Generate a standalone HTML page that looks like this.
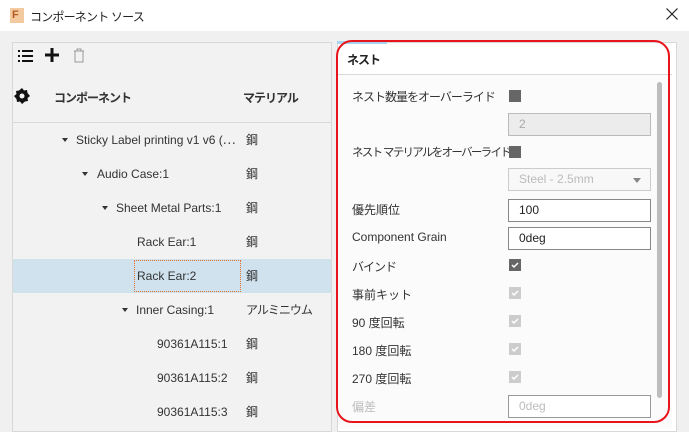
<!DOCTYPE html>
<html><head><meta charset="utf-8"><style>
*{margin:0;padding:0;box-sizing:border-box}
body{width:689px;height:429px;overflow:hidden;background:#f0f0f0;font-family:"Liberation Sans","Noto Sans CJK JP",sans-serif;font-size:12px;color:#222;position:relative}
.a{position:absolute}
.title{left:0;top:0;width:689px;height:31px;background:#fff}
.row{position:absolute;left:13px;width:318px;height:34px;line-height:34px}
.tri{position:absolute;width:0;height:0;border-left:3px solid transparent;border-right:3px solid transparent;border-top:4px solid #333;top:15px}
.lab{position:absolute;font-size:12px;color:#333}
.jp{letter-spacing:-1px}
.inp{position:absolute;left:508px;width:143px;height:23px;border:1px solid #999;background:#fff;padding-left:10px;line-height:21px;font-size:12px}
.plab{position:absolute;left:352px;font-size:12px;color:#333;letter-spacing:-1px}
</style></head><body>
<div class="a title"></div>
<div class="a" style="left:10px;top:8px;width:14px;height:15px;background:#f3c9a0;color:#b35a1f;font-weight:bold;font-size:11px;line-height:15px;padding-left:2px">F</div>
<div class="a" style="left:30px;top:8px;font-size:12px;letter-spacing:-0.8px">コンポーネント ソース</div>
<svg class="a" style="left:666px;top:8px" width="12" height="12"><path d="M0.5 0.5l11 11M11.5 0.5l-11 11" stroke="#222" stroke-width="1.2"/></svg>
<!-- left panel -->
<div class="a" style="left:12px;top:42px;width:320px;height:390px;background:#f2f2f2;border:1px solid #d8d8d8"></div>
<div class="a" style="left:13px;top:122px;width:318px;height:1px;background:#d8d8d8"></div>
<svg class="a" style="left:18px;top:50px" width="16" height="12"><g fill="#111"><rect x="0" y="0" width="2" height="2"/><rect x="4" y="0" width="11" height="2"/><rect x="0" y="5" width="2" height="2"/><rect x="4" y="5" width="11" height="2"/><rect x="0" y="10" width="2" height="2"/><rect x="4" y="10" width="11" height="2"/></g></svg>
<svg class="a" style="left:45px;top:48px" width="14" height="14"><rect x="5.5" y="0" width="3" height="14" fill="#111"/><rect x="0" y="5.5" width="14" height="3" fill="#111"/></svg>
<svg class="a" style="left:73px;top:48px" width="12" height="15"><path d="M1 3h10M4 3V1h4v2M2 3v11h8V3" stroke="#999" fill="none"/></svg>
<svg class="a" style="left:14px;top:88px" width="16" height="16" viewBox="0 0 16 16"><path d="M8 0l2 2.5 3-.5.5 3L16 8l-2.5 2 .5 3-3 .5L8 16l-2-2.5-3 .5-.5-3L0 8l2.5-2L2 3l3-.5z" fill="#111"/><circle cx="8" cy="8" r="2.5" fill="#f2f2f2"/></svg>
<div class="a jp" style="left:54px;top:89px;font-weight:bold;color:#333">コンポーネント</div>
<div class="a jp" style="left:243px;top:89px;font-weight:bold;color:#333">マテリアル</div>
<div class="row" style="top:123px"><div class="tri" style="left:49px"></div><span class="lab" style="left:63px">Sticky Label printing v1 v6 (⋯</span><span class="lab" style="left:233px">鋼</span></div>
<div class="row" style="top:157px"><div class="tri" style="left:69px"></div><span class="lab" style="left:84px">Audio Case:1</span><span class="lab" style="left:233px">鋼</span></div>
<div class="row" style="top:191px"><div class="tri" style="left:89px"></div><span class="lab" style="left:103px">Sheet Metal Parts:1</span><span class="lab" style="left:233px">鋼</span></div>
<div class="row" style="top:225px"><span class="lab" style="left:124px">Rack Ear:1</span><span class="lab" style="left:233px">鋼</span></div>
<div class="row" style="top:259px;background:#cfe2ee"><div class="a" style="left:121px;top:1px;width:107px;height:32px;border:1px dotted #e07030"></div><span class="lab" style="left:124px">Rack Ear:2</span><span class="lab" style="left:233px">鋼</span></div>
<div class="row" style="top:293px"><div class="tri" style="left:109px"></div><span class="lab" style="left:123px">Inner Casing:1</span><span class="lab jp" style="left:233px">アルミニウム</span></div>
<div class="row" style="top:327px"><span class="lab" style="left:144px">90361A115:1</span><span class="lab" style="left:233px">鋼</span></div>
<div class="row" style="top:361px"><span class="lab" style="left:144px">90361A115:2</span><span class="lab" style="left:233px">鋼</span></div>
<div class="row" style="top:395px"><span class="lab" style="left:144px">90361A115:3</span><span class="lab" style="left:233px">鋼</span></div>
<!-- right panel -->
<div class="a" style="left:337px;top:42px;width:340px;height:390px;background:#fff;border:1px solid #d8d8d8"></div>
<div class="a" style="left:337px;top:41px;width:50px;height:3px;background:#a8d4f0"></div>
<div class="a" style="left:338px;top:74px;width:334px;height:1px;background:#d8d8d8"></div>
<div class="a" style="left:338px;top:75px;width:334px;height:354px;background:#fbfbfb"></div>
<div class="a jp" style="left:347px;top:51px;font-weight:bold;color:#222">ネスト</div>
<div class="a" style="left:657px;top:82px;width:5px;height:316px;background:#bdbdbd;border-radius:3px"></div>
<div class="plab" style="top:88px">ネスト数量をオーバーライド</div>
<div class="inp" style="top:113px;background:#ececec;border-color:#bbb;color:#aaa">2</div>
<div class="plab" style="top:144px;font-size:11.5px;letter-spacing:-1.7px">ネスト マテリアルをオーバーライド</div>
<div class="inp" style="top:168px;border-color:#ccc;color:#bbb;background:#f8f8f8">Steel - 2.5mm<span style="position:absolute;right:9px;top:9px;border-left:4px solid transparent;border-right:4px solid transparent;border-top:5px solid #888"></span></div>
<div class="plab" style="top:201px;letter-spacing:0">優先順位</div><div class="inp" style="top:199px;border-color:#888">100</div>
<div class="plab" style="top:230px;letter-spacing:0">Component Grain</div><div class="inp" style="top:227px;border-color:#888">0deg</div>
<div class="plab" style="top:258px">バインド</div>
<div class="plab" style="top:286px;letter-spacing:0">事前キット</div>
<div class="plab" style="top:314px;letter-spacing:0">90 度回転</div>
<div class="plab" style="top:342px;letter-spacing:0">180 度回転</div>
<div class="plab" style="top:370px;letter-spacing:0">270 度回転</div>
<div class="plab" style="top:398px;color:#bbb;letter-spacing:0">偏差</div>
<div class="inp" style="top:395px;border-color:#999;color:#bbb">0deg</div>
<svg class="a" style="left:509px;top:90px" width="12" height="300">
<rect width="12" height="12" fill="#666"/>
<rect y="56" width="12" height="12" fill="#666"/>
<g transform="translate(0,169)"><rect width="12" height="12" fill="#666"/><path d="M3 6l2 2 4-4" stroke="#fff" stroke-width="1.5" fill="none"/></g>
<g transform="translate(0,197)"><rect width="12" height="12" fill="#ccc"/><path d="M3 6l2 2 4-4" stroke="#fff" stroke-width="1.5" fill="none"/></g>
<g transform="translate(0,225)"><rect width="12" height="12" fill="#ccc"/><path d="M3 6l2 2 4-4" stroke="#fff" stroke-width="1.5" fill="none"/></g>
<g transform="translate(0,253)"><rect width="12" height="12" fill="#ccc"/><path d="M3 6l2 2 4-4" stroke="#fff" stroke-width="1.5" fill="none"/></g>
<g transform="translate(0,281)"><rect width="12" height="12" fill="#ccc"/><path d="M3 6l2 2 4-4" stroke="#fff" stroke-width="1.5" fill="none"/></g>
</svg>
<div class="a" style="left:336px;top:40px;width:334px;height:383px;border:2px solid #e8141c;border-radius:16px"></div>
</body></html>
